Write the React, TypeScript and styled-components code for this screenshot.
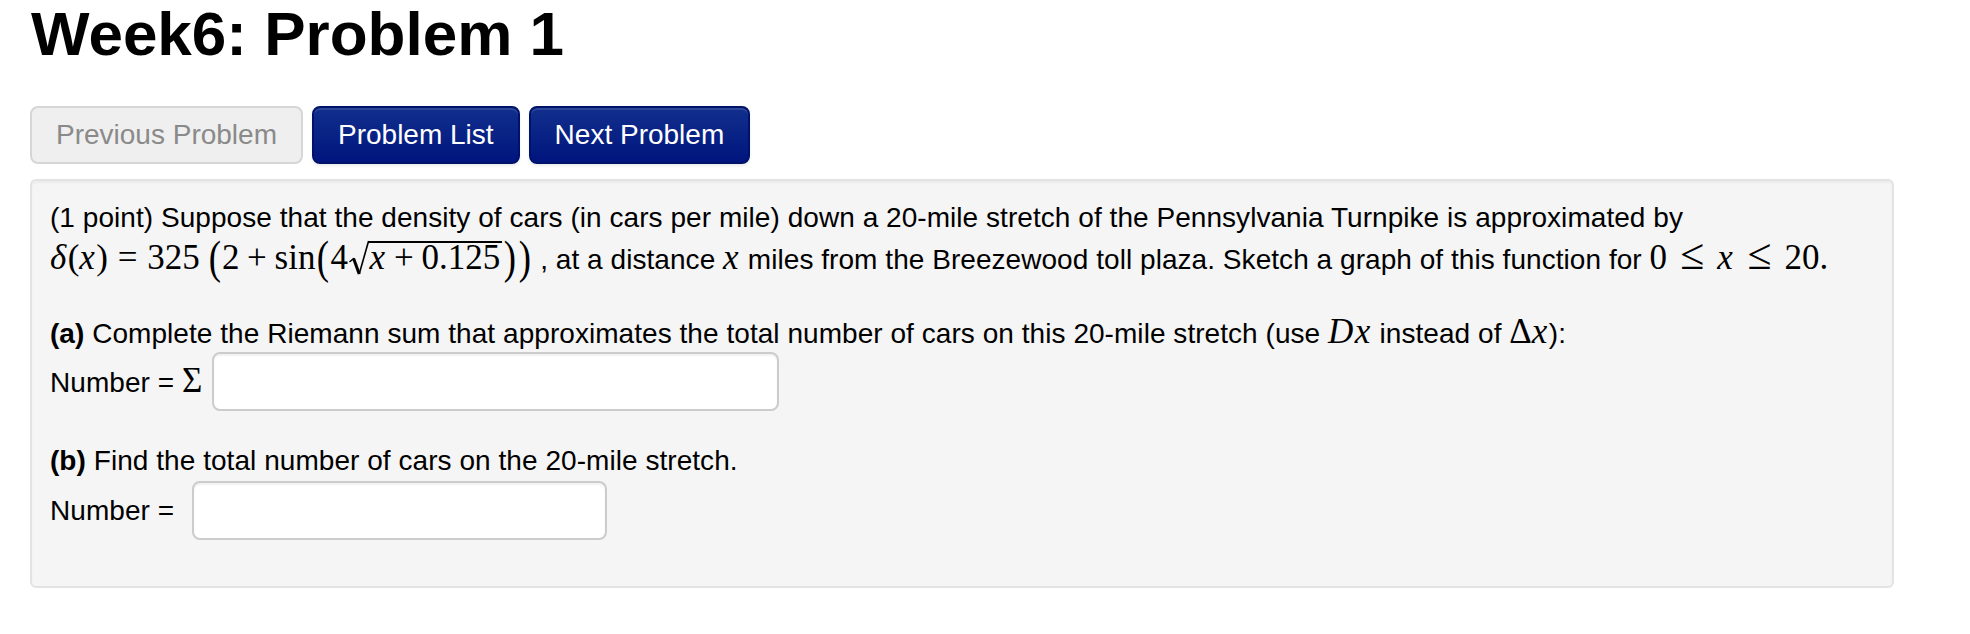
import React from 'react';
import styled, { createGlobalStyle } from 'styled-components';

const GlobalStyle = createGlobalStyle`
  html, body {
    margin: 0;
    padding: 0;
    background: #ffffff;
  }

  body {
    font-family: "Liberation Sans", Arial, Helvetica, sans-serif;
    font-size: 28px;
    letter-spacing: 0.05px;
    color: #000000;
  }
`;

const RadicalSign = () => (
  <RadicalSvg viewBox="0 0 20 37" width="20" height="37">
    <path d="M1 21.5 L4.6 18.6" stroke="#000" strokeWidth="1.6" fill="none" strokeLinecap="round" />
    <path d="M4.6 18.6 L10.2 34" stroke="#000" strokeWidth="3" fill="none" />
    <path d="M10.2 34 L19.6 1" stroke="#000" strokeWidth="1.6" fill="none" />
  </RadicalSvg>
);

const App: React.FC = () => {
  return (
    <>
      <GlobalStyle />
      <Page>
        <Title>Week6: Problem 1</Title>

        <ButtonRow>
          <NavButton disabled>Previous Problem</NavButton>
          <NavButton $primary>Problem List</NavButton>
          <NavButton $primary>Next Problem</NavButton>
        </ButtonRow>

        <ProblemPanel>
          <Para>
            (1 point) Suppose that the density of cars (in cars per mile) down a 20-mile stretch of the
            Pennsylvania Turnpike is approximated by{' '}
            <MathExpr>
              <MI>δ</MI>(<MI>x</MI>)<Rel>=</Rel>325<Thin />
              <BigParen>(</BigParen>2<Bin>+</Bin>sin<BigParen>(</BigParen>4
              <Sqrt>
                <RadicalSign />
                <Radicand>
                  <MI>x</MI>
                  <Bin>+</Bin>0.125
                </Radicand>
              </Sqrt>
              <BigParen>)</BigParen>
              <BigParen>)</BigParen>
            </MathExpr>{' '}
            , at a distance <MathExpr><MI>x</MI></MathExpr> miles from the Breezewood toll plaza. Sketch a
            graph of this function for{' '}
            <MathExpr>
              0<LessEq>≤</LessEq><MI>x</MI><LessEq>≤</LessEq>20.
            </MathExpr>
          </Para>

          <PartPara>
            <b>(a)</b> Complete the Riemann sum that approximates the total number of cars on this 20-mile
            stretch (use{' '}
            <MathExpr>
              <MI>D</MI><MI>x</MI>
            </MathExpr>{' '}
            instead of{' '}
            <MathExpr>
              Δ<MI>x</MI>
            </MathExpr>
            ):
          </PartPara>
          <AnswerRow $shift={-2}>
            <AnswerLabel>
              Number = <MathExpr>Σ</MathExpr>
            </AnswerLabel>
            <AnswerInput $width={567} type="text" />
          </AnswerRow>

          <PartPara $gap={30}>
            <b>(b)</b> Find the total number of cars on the 20-mile stretch.
          </PartPara>
          <AnswerRow>
            <AnswerLabel>Number =&nbsp;</AnswerLabel>
            <AnswerInput $width={415} type="text" />
          </AnswerRow>
        </ProblemPanel>
      </Page>
    </>
  );
};

export default App;

const Page = styled.div`
  width: 1864px;
  padding-left: 30px;
`;

const Title = styled.h1`
  margin: 0;
  padding-left: 1px;
  font-size: 62px;
  line-height: 68px;
  font-weight: 700;
  letter-spacing: 0;
  color: #000;
`;

const ButtonRow = styled.div`
  display: flex;
  gap: 9px;
  margin-top: 38px;
`;

const NavButton = styled.button<{ $primary?: boolean }>`
  height: 58px;
  padding: 0 24px;
  border-radius: 8px;
  font-family: "Liberation Sans", Arial, Helvetica, sans-serif;
  font-size: 28px;
  letter-spacing: 0;
  line-height: 1;
  cursor: pointer;
  border: 2px solid ${(p) => (p.$primary ? '#00136b' : '#d6d6d6')};
  color: ${(p) => (p.$primary ? '#ffffff' : '#8a8a8a')};
  background: ${(p) =>
    p.$primary ? 'linear-gradient(#112f8c, #00157e)' : '#efefef'};
  box-shadow: ${(p) =>
    p.$primary ? 'inset 0 2px 0 rgba(255,255,255,0.12), 0 2px 3px rgba(0,0,0,0.08)' : 'none'};

  &:disabled {
    cursor: default;
  }
`;

const ProblemPanel = styled.div`
  margin-top: 15px;
  background: #f5f5f5;
  border: 2px solid #e3e3e3;
  border-radius: 6px;
  padding: 17px 19px 46px 18px;
  box-shadow: inset 0 2px 2px rgba(0, 0, 0, 0.04);
`;

const Para = styled.p`
  margin: 0;
  line-height: 40px;
`;

const PartPara = styled(Para)<{ $gap?: number }>`
  margin-top: ${(p) => p.$gap ?? 32}px;
`;

const AnswerRow = styled.div<{ $shift?: number }>`
  display: flex;
  align-items: center;
  gap: 10px;
  margin-top: ${(p) => p.$shift ?? 0}px;
  line-height: 40px;
`;

const AnswerLabel = styled.span`
  white-space: nowrap;
`;

const AnswerInput = styled.input<{ $width: number }>`
  width: ${(p) => p.$width}px;
  height: 59px;
  box-sizing: border-box;
  margin: 0;
  background: #ffffff;
  border: 2px solid #cccccc;
  border-radius: 8px;
  box-shadow: inset 0 2px 2px rgba(0, 0, 0, 0.06);
  font-size: 28px;
  padding: 0 12px;
  outline: none;
`;

/* inline math, set in a Times-like serif */
const MathExpr = styled.span`
  font-family: "Liberation Serif", "Times New Roman", serif;
  font-size: 35px;
  letter-spacing: 0;
  white-space: nowrap;
`;

const MI = styled.i`
  font-style: italic;
  padding-right: 0.04em;
`;

const Rel = styled.span`
  margin: 0 0.28em;
`;

const LessEq = styled.span`
  font-size: 1.25em;
  line-height: 0;
  margin: 0 0.3em;
`;

const Bin = styled.span`
  margin: 0 0.22em;
`;

const Thin = styled.span`
  display: inline-block;
  width: 0.2em;
`;

const BigParen = styled.span`
  display: inline-block;
  line-height: 1;
  transform: scale(1.05, 1.35);
  margin: 0 0.05em;
`;

const Sqrt = styled.span`
  display: inline-block;
  white-space: nowrap;
  line-height: 1;
  margin-left: 0.04em;
`;

const RadicalSvg = styled.svg`
  display: inline-block;
  vertical-align: -8px;
`;

const Radicand = styled.span`
  display: inline-block;
  border-top: 2px solid #000;
  line-height: 0.8;
  padding-top: 1px;
  padding-right: 0.05em;
`;
